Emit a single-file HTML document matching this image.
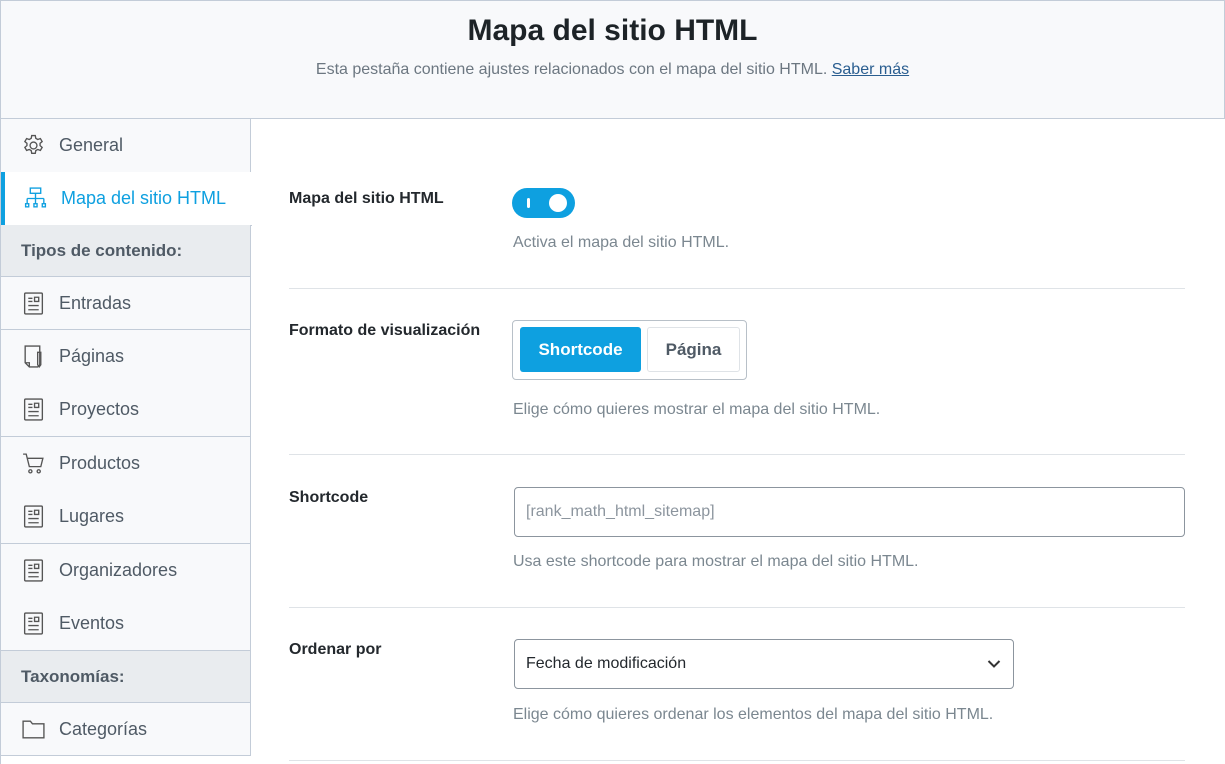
<!DOCTYPE html><html><head><meta charset="utf-8"><style>
*{box-sizing:border-box;margin:0;padding:0}
body{width:1225px;height:764px;overflow:hidden;background:#fff;font-family:"Liberation Sans",sans-serif;position:relative}
.hdr{position:absolute;left:0;top:0;width:1225px;height:119px;background:#f8f9fb;border:1px solid #c3ccd8;border-bottom:1px solid #c3ccd8;text-align:center}
.hdr h1{font-size:30px;font-weight:600;color:#1d2327;margin-top:13px}
.hdr p{font-size:16px;color:#6c7781;margin-top:13px}
.hdr a{color:#2a5e90;text-decoration:underline}
.side{position:absolute;left:0;top:118px;width:251px;height:646px;border-left:1px solid #c3ccd8}
.it{position:absolute;left:0;width:250px;background:#f8f9fb;border-bottom:1px solid #c3ccd8;border-right:1px solid #c3ccd8;font-size:18px;color:#4f5a65;display:flex;align-items:center;padding-left:20px}
.it svg{width:25px;height:25px;margin-right:13px;flex:none}
.act{background:#fff;border-right:none;color:#0ea0e0;border-left:4px solid #0ea0e0;padding-left:18px;width:251px}
.grp{background:#e9ecef;font-weight:600;font-size:17px;color:#4f5a65}
.lbl{position:absolute;left:289px;font-size:16px;font-weight:600;color:#23282d}
.desc{position:absolute;left:513px;font-size:16px;color:#7b8790}
.hr{position:absolute;left:289px;width:896px;border-top:1px solid #dfe3e7}
.inp{position:absolute;left:514px;border:1px solid #8c959e;border-radius:4px;font-size:16px;display:flex;align-items:center;padding-left:11px}
</style></head><body>
<div class="hdr"><h1>Mapa del sitio HTML</h1><p>Esta pestaña contiene ajustes relacionados con el mapa del sitio HTML. <a>Saber más</a></p></div>
<div class="side">
<div class="it" style="top:1px;height:54px"><svg viewBox="0 0 24 24" fill="none" stroke="#555" stroke-width="1.3"><circle cx="12" cy="12" r="3.3"/><path d="M10.3 2.5h3.4l.5 2.6 1.9 1.1 2.5-.9 1.7 2.9-2 1.7v2.2l2 1.7-1.7 2.9-2.5-.9-1.9 1.1-.5 2.6h-3.4l-.5-2.6-1.9-1.1-2.5.9-1.7-2.9 2-1.7v-2.2l-2-1.7 1.7-2.9 2.5.9 1.9-1.1z"/></svg>General</div>
<div class="it act" style="top:54px;height:54px"><svg viewBox="0 0 24 24" fill="none" stroke="#0ea0e0" stroke-width="1.3"><rect x="7" y="2" width="10" height="5"/><path d="M12 7v5M4 12h16M4 12v5M12 12v5M20 12v5"/><rect x="2.5" y="17" width="3" height="3"/><rect x="10.5" y="17" width="3" height="3"/><rect x="18.5" y="17" width="3" height="3"/></svg>Mapa del sitio HTML</div>
<div class="it grp" style="top:107px;height:52px">Tipos de contenido:</div>
<div class="it" style="top:159px;height:53px"><svg viewBox="0 0 24 24" fill="none" stroke="#555" stroke-width="1.3"><rect x="3.5" y="2" width="17" height="20" rx="1"/><path d="M7 7h4M7 10h4M13 6h4v4h-4zM7 14h10M7 18h10"/></svg>Entradas</div>
<div class="it" style="top:212px;height:54px"><svg viewBox="0 0 24 24" fill="none" stroke="#555" stroke-width="1.3"><path d="M4 2h14v18l-2 2H8l-4-4z M4 18h4v4"/><path d="M16 8l3 0v12l-1.5 2-1.5-2z"/></svg>Páginas</div>
<div class="it" style="top:265px;height:54px"><svg viewBox="0 0 24 24" fill="none" stroke="#555" stroke-width="1.3"><rect x="3.5" y="2" width="17" height="20" rx="1"/><path d="M7 7h4M7 10h4M13 6h4v4h-4zM7 14h10M7 18h10"/></svg>Proyectos</div>
<div class="it" style="top:319px;height:54px"><svg viewBox="0 0 24 24" fill="none" stroke="#555" stroke-width="1.3"><path d="M2 3h3l3 12h11l2-8H6"/><circle cx="9" cy="19.5" r="1.5"/><circle cx="17" cy="19.5" r="1.5"/></svg>Productos</div>
<div class="it" style="top:372px;height:54px"><svg viewBox="0 0 24 24" fill="none" stroke="#555" stroke-width="1.3"><rect x="3.5" y="2" width="17" height="20" rx="1"/><path d="M7 7h4M7 10h4M13 6h4v4h-4zM7 14h10M7 18h10"/></svg>Lugares</div>
<div class="it" style="top:426px;height:54px"><svg viewBox="0 0 24 24" fill="none" stroke="#555" stroke-width="1.3"><rect x="3.5" y="2" width="17" height="20" rx="1"/><path d="M7 7h4M7 10h4M13 6h4v4h-4zM7 14h10M7 18h10"/></svg>Organizadores</div>
<div class="it" style="top:479px;height:54px"><svg viewBox="0 0 24 24" fill="none" stroke="#555" stroke-width="1.3"><rect x="3.5" y="2" width="17" height="20" rx="1"/><path d="M7 7h4M7 10h4M13 6h4v4h-4zM7 14h10M7 18h10"/></svg>Eventos</div>
<div class="it grp" style="top:533px;height:52px">Taxonomías:</div>
<div class="it" style="top:585px;height:53px"><svg viewBox="0 0 24 24" fill="none" stroke="#555" stroke-width="1.3"><path d="M2 4h7l2 2.5h11V20H2z"/></svg>Categorías</div>
</div>

<div class="lbl" style="top:190px">Mapa del sitio HTML</div>
<div style="position:absolute;left:512px;top:188px;width:63px;height:30px;border-radius:15px;background:#0ea0e0"><div style="position:absolute;left:15px;top:10px;width:3px;height:10px;background:#fff;border-radius:2px"></div><div style="position:absolute;left:37px;top:6px;width:18px;height:18px;border-radius:50%;background:#fff"></div></div>
<div class="desc" style="top:234px">Activa el mapa del sitio HTML.</div>
<div class="hr" style="top:288px"></div>

<div class="lbl" style="top:322px">Formato de visualización</div>
<div style="position:absolute;left:512px;top:320px;width:235px;height:60px;border:1px solid #b8c0c8;border-radius:4px"></div>
<div style="position:absolute;left:520px;top:327px;width:121px;height:45px;background:#0ea0e0;border-radius:3px;color:#fff;font-size:17px;font-weight:600;display:flex;align-items:center;justify-content:center">Shortcode</div>
<div style="position:absolute;left:647px;top:327px;width:93px;height:45px;border:1px solid #dfe3e7;border-radius:3px;color:#4f5a65;font-size:17px;font-weight:600;display:flex;align-items:center;justify-content:center">Página</div>
<div class="desc" style="top:401px">Elige cómo quieres mostrar el mapa del sitio HTML.</div>
<div class="hr" style="top:454px"></div>

<div class="lbl" style="top:489px">Shortcode</div>
<div class="inp" style="top:487px;width:671px;height:50px;color:#8c959e">[rank_math_html_sitemap]</div>
<div class="desc" style="top:553px">Usa este shortcode para mostrar el mapa del sitio HTML.</div>
<div class="hr" style="top:607px"></div>

<div class="lbl" style="top:641px">Ordenar por</div>
<div class="inp" style="top:639px;width:500px;height:50px;color:#23282d">Fecha de modificación<svg style="position:absolute;right:12px;top:19px" width="14" height="10" viewBox="0 0 14 10"><path d="M1.5 2l5.5 5.5L12.5 2" fill="none" stroke="#333" stroke-width="2"/></svg></div>
<div class="desc" style="top:706px">Elige cómo quieres ordenar los elementos del mapa del sitio HTML.</div>
<div class="hr" style="top:760px"></div>
</body></html>
